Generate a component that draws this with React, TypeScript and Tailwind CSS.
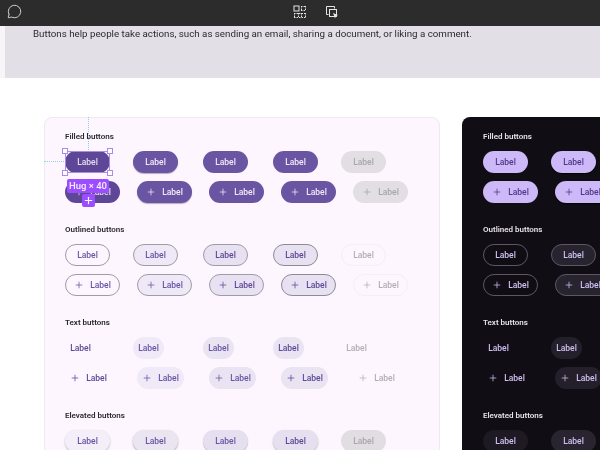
import { MessageCircle, Plus } from "lucide-react";

const font = "font-['Roboto',_'Liberation_Sans',_sans-serif]";

type Mode = "light" | "dark";
type Kind = "filled" | "outlined" | "text" | "elevated";

const styles: Record<Mode, Record<Kind, string[]>> = {
  light: {
    filled: [
      "bg-[#5f4797] text-[#e4dcf2]",
      "bg-[#6a55a3] text-[#f0eaf8] shadow-[0_1px_1px_#b5aec4]",
      "bg-[#6a55a3] text-[#f0eaf8]",
      "bg-[#6a55a3] text-[#f0eaf8]",
      "bg-[#e2dee4] text-[#a9a5ad]",
    ],
    outlined: [
      "border-[1.5px] border-[#a09ba6] text-[#6a55a3]",
      "border-[1.5px] border-[#a09ba6] bg-[#efe8f6] text-[#6a55a3]",
      "border-[1.5px] border-[#a09ba6] bg-[#e7e1f1] text-[#5f4797]",
      "border-[1.5px] border-[#8f8a96] bg-[#e7e1f1] text-[#5f4797]",
      "border-[1.5px] border-[#f4eef6] text-[#b2aeb6]",
    ],
    text: [
      "text-[#5f4797]",
      "bg-[#f0e9f7] text-[#6a55a3]",
      "bg-[#e9e3f2] text-[#6a55a3]",
      "bg-[#e9e3f2] text-[#5f4797]",
      "text-[#b2aeb6]",
    ],
    elevated: [
      "bg-[#f4eef8] text-[#6a55a3] shadow-[0_1px_2px_#b9b3c0]",
      "bg-[#ebe5f2] text-[#6a55a3] shadow-[0_1px_2px_#a9a3b0]",
      "bg-[#e5dff0] text-[#6a55a3] shadow-[0_1px_1px_#b9b3c0]",
      "bg-[#e5dff0] text-[#5f4797] shadow-[0_1px_2px_#b9b3c0]",
      "bg-[#e1dde2] text-[#a9a5ad]",
    ],
  },
  dark: {
    filled: [
      "bg-[#cdb9f7] text-[#4f378b]",
      "bg-[#cdb9f7] text-[#4f378b] shadow-[0_1px_1px_#000]",
      "bg-[#cdb9f7] text-[#4f378b]",
      "bg-[#cdb9f7] text-[#4f378b]",
      "bg-[#2b2930] text-[#77747c]",
    ],
    outlined: [
      "border-[1.5px] border-[#5c5862] text-[#d0c2f2]",
      "border-[1.5px] border-[#5c5862] bg-[#27232f] text-[#d0c2f2]",
      "border-[1.5px] border-[#5c5862] bg-[#2b2733] text-[#d0c2f2]",
      "border-[1.5px] border-[#5c5862] bg-[#2b2733] text-[#d0c2f2]",
      "border-[1.5px] border-[#2b2930] text-[#77747c]",
    ],
    text: [
      "text-[#cfc0f0]",
      "bg-[#231f2b] text-[#cfc0f0]",
      "bg-[#2b2733] text-[#cfc0f0]",
      "bg-[#2b2733] text-[#cfc0f0]",
      "text-[#77747c]",
    ],
    elevated: [
      "bg-[#1d1a23] text-[#cfc0f0]",
      "bg-[#282530] text-[#cfc0f0]",
      "bg-[#2e2a37] text-[#cfc0f0]",
      "bg-[#2e2a37] text-[#cfc0f0]",
      "bg-[#2b2930] text-[#77747c]",
    ],
  },
};

const sizes: Record<Kind, { plain: string; icon: string }> = {
  filled: { plain: "w-[45px]", icon: "w-[55px]" },
  outlined: { plain: "w-[45px]", icon: "w-[55px]" },
  elevated: { plain: "w-[45px]", icon: "w-[55px]" },
  text: { plain: "w-[31px]", icon: "w-[47px]" },
};

function Selection() {
  const handle = "absolute h-[6px] w-[6px] border border-[#a98be8] bg-white";
  return (
    <div className="absolute inset-0 z-10">
      <div className="absolute inset-0 border border-[#a98be8]" />
      <div className={handle + " -left-[3px] -top-[3px]"} />
      <div className={handle + " -right-[3px] -top-[3px]"} />
      <div className={handle + " -left-[3px] -bottom-[3px]"} />
      <div className={handle + " -right-[3px] -bottom-[3px]"} />
      <div className="absolute -top-[34px] left-[23px] h-[33px] border-l border-dotted border-[#8fd0e4]" />
      <div className="absolute left-[-21px] top-[10px] w-[20px] border-t border-dotted border-[#8fd0e4]" />
      <div className={"absolute left-[2px] top-[28px] flex h-[14px] w-[42px] items-center justify-center rounded-[2px] bg-[#9c4dff] text-[9.5px] font-medium whitespace-nowrap text-[#f6efff] " + font}>
        Hug × 40
      </div>
      <div className="absolute left-[17px] top-[43px] flex h-[13px] w-[13px] items-center justify-center rounded-[2px] bg-[#9c4dff] text-white">
        <Plus size={11} strokeWidth={2.5} />
      </div>
    </div>
  );
}

function Btn(props: { cls: string; width: string; icon?: boolean; selected?: boolean }) {
  return (
    <div className={"relative flex h-[22px] items-center justify-center gap-[6px] rounded-full text-[8.5px] font-medium " + props.width + " " + props.cls}>
      {props.icon && <Plus size={10} strokeWidth={1.8} />}
      <span>Label</span>
      {props.selected && <Selection />}
    </div>
  );
}

function Section(props: { title: string; kind: Kind; mode: Mode; selected?: boolean }) {
  const list = styles[props.mode][props.kind];
  const size = sizes[props.kind];
  return (
    <div className="flex flex-col pb-[20px]">
      <div className={"h-[12px] text-[8px] leading-[14px] font-semibold " + (props.mode === "dark" ? "text-[#e6e0e9]" : "text-[#2b2930]")}>
        {props.title}
      </div>
      <div className="mt-[9px] grid grid-cols-[68px_70px_70px_68px_68px]">
        {list.map((cls, i) => (
          <Btn key={i} cls={cls} width={size.plain} selected={props.selected && i === 0} />
        ))}
      </div>
      <div className="mt-[8px] grid grid-cols-[72px_72px_72px_72px_72px]">
        {list.map((cls, i) => (
          <Btn key={i} cls={cls} width={size.icon} icon />
        ))}
      </div>
    </div>
  );
}

function Board(props: { mode: Mode }) {
  const card =
    props.mode === "dark"
      ? "rounded-l-[8px] bg-[#100e14] pl-[21px] pt-[13px]"
      : "rounded-[8px] border border-[#eeeaf0] bg-[#fdf6fe] pl-[20px] pt-[12px]";
  return (
    <div className={"h-[360px] w-[396px] shrink-0 " + card}>
      <Section title="Filled buttons" kind="filled" mode={props.mode} selected={props.mode === "light"} />
      <Section title="Outlined buttons" kind="outlined" mode={props.mode} />
      <Section title="Text buttons" kind="text" mode={props.mode} />
      <Section title="Elevated buttons" kind="elevated" mode={props.mode} />
    </div>
  );
}

export default function App() {
  return (
    <div className={"h-[450px] w-[600px] overflow-hidden bg-white blur-[0.5px] " + font}>
      <header className="flex h-[26px] items-center bg-[#2c2c2c] text-[#e4e4e4]">
        <MessageCircle size={15} strokeWidth={1.4} className="ml-[7px] -mt-[3px]" />
        <svg width="14" height="14" viewBox="0 0 14 14" className="ml-[271px] -mt-[3px]" fill="none" stroke="currentColor">
          <rect x="1" y="1" width="5" height="5" />
          <path d="M8 1.5h5M8 5.5h5M1 8.5h12M1 12.5h12M8.500 1v5M12.500 1v5M1.500 8v5M5.500 8v5M8.500 8v5M12.500 8v5" strokeDasharray="1.500 1" />
        </svg>
        <svg width="15" height="15" viewBox="0 0 15 15" className="ml-[18px] -mt-[2px]" fill="none" stroke="currentColor">
          <path d="M3.500 9.500h-2v-8h8v2" />
          <rect x="4.500" y="4.500" width="7" height="7" />
          <path d="M8 8l5 2-2 1-1 2.500z" fill="currentColor" stroke="none" />
        </svg>
      </header>
      <div className="bg-[#f7f5f8] pl-[5px]">
        <div className="h-[52px] bg-[#e3dfe6] pl-[28px] pt-[1px]">
          <p className="text-[9.75px] leading-[13px] text-[#2c2a30]">
            Buttons help people take actions, such as sending an email, sharing a document, or liking a comment.
          </p>
        </div>
      </div>
      <main className="flex gap-[22px] pl-[44px] pt-[39px]">
        <Board mode="light" />
        <Board mode="dark" />
      </main>
    </div>
  );
}
